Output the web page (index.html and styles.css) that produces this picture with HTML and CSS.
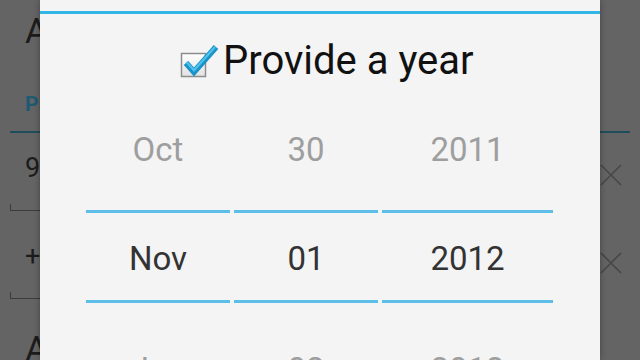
FILE: index.html
```html
<!DOCTYPE html>
<html lang="en">
<head>
    <meta charset="UTF-8">
    <meta name="viewport" content="width=device-width, initial-scale=1.0">
    <title>Set date</title>
    <link rel="stylesheet" href="styles.css">
</head>
<body>
    <div class="screen">
        <!-- Contact form behind the dialog (dimmed) -->
        <div class="form">
            <div class="form-item">Add organization</div>
            <div class="section-head">PHONE</div>

            <div class="field">
                <span class="field-text">999-555-1234</span>
                <svg class="clear" width="24" height="24" viewBox="0 0 24 24">
                    <path d="M2 2 L22 22 M22 2 L2 22" stroke="#474747" stroke-width="1.6" fill="none"/>
                </svg>
            </div>
            <div class="field-line"></div>

            <div class="field field-next">
                <span class="field-text">+1 555 0100</span>
                <svg class="clear" width="24" height="24" viewBox="0 0 24 24">
                    <path d="M2 2 L22 22 M22 2 L2 22" stroke="#474747" stroke-width="1.6" fill="none"/>
                </svg>
            </div>
            <div class="field-line"></div>

            <div class="form-item form-last">Add another field</div>
        </div>

        <!-- Date picker dialog -->
        <div class="dialog">
            <div class="dialog-head"></div>

            <div class="year-toggle">
                <svg class="check" width="42" height="36" viewBox="0 0 42 36">
                    <defs>
                        <linearGradient id="boxFill" x1="0" y1="0" x2="0" y2="1">
                            <stop offset="0" stop-color="#ffffff"/>
                            <stop offset="1" stop-color="#e2e2e2"/>
                        </linearGradient>
                    </defs>
                    <rect x="3.5" y="10.5" width="24" height="23" fill="url(#boxFill)" stroke="#8d8d8d" stroke-width="1.5"/>
                    <path d="M8 20 L16 29 L38 4" stroke="#1c93c8" stroke-width="6" fill="none" stroke-linejoin="miter"/>
                    <path d="M8.5 19 L16 27.3 L37 4" stroke="#4fc1ee" stroke-width="2.2" fill="none"/>
                </svg>
                <span class="toggle-label">Provide a year</span>
            </div>

            <div class="picker">
                <div class="col col-month">
                    <div class="cell cell-prev">Oct</div>
                    <div class="divider"></div>
                    <div class="cell cell-cur">Nov</div>
                    <div class="divider"></div>
                    <div class="cell cell-next">Jan</div>
                </div>
                <div class="col col-day">
                    <div class="cell cell-prev">30</div>
                    <div class="divider"></div>
                    <div class="cell cell-cur">01</div>
                    <div class="divider"></div>
                    <div class="cell cell-next">02</div>
                </div>
                <div class="col col-year">
                    <div class="cell cell-prev">2011</div>
                    <div class="divider"></div>
                    <div class="cell cell-cur">2012</div>
                    <div class="divider"></div>
                    <div class="cell cell-next">2013</div>
                </div>
            </div>
        </div>
    </div>
</body>
</html>
```

FILE: styles.css
```css
/* Page */
body {
    margin: 0;
    padding: 0;
    font-family: Roboto, "Liberation Sans", sans-serif;
    background-color: #646464;
}
.screen {
    position: relative;
    width: 640px;
    height: 360px;
    overflow: hidden;
    background-color: #646464;
}

/* Dimmed form behind the dialog */
.form {
    padding: 0 10px;
    color: #1c1c1c;
}
.form-item {
    height: 64px;
    line-height: 64px;
    padding-left: 15px;
    font-size: 35px;
    white-space: nowrap;
}
.form-last {
    margin-top: 19px;
}
.section-head {
    padding: 25px 0 12px 15px;
    line-height: 30px;
    font-size: 21px;
    font-weight: bold;
    color: #1d5a73;
    border-bottom: 2px solid #1f4d59;
}
.field {
    display: flex;
    align-items: center;
    justify-content: space-between;
    height: 69px;
    padding-left: 15px;
    font-size: 27px;
}
.field-next {
    margin-top: 10px;
}
.field-text {
    white-space: nowrap;
}
.clear {
    margin-top: 14px;
    margin-right: 7px;
}
.field-line {
    height: 6px;
    margin-top: 2px;
    margin-right: 40px;
    border-left: 1px solid #3b3b3b;
    border-bottom: 1px solid #3b3b3b;
}

/* Dialog */
.dialog {
    position: absolute;
    left: 40px;
    top: 0;
    width: 560px;
    height: 360px;
    background: #f4f4f4;
    box-shadow: 0 0 6px rgba(0,0,0,0.35);
}
.dialog-head {
    height: 11px;
    border-bottom: 3px solid #33b5e5;
}
.year-toggle {
    display: flex;
    align-items: center;
    height: 82px;
    padding-top: 12px;
    padding-left: 138px;
    box-sizing: border-box;
}
.toggle-label {
    margin-left: 3px;
    font-size: 40px;
    line-height: 46px;
    color: #111;
}

/* Number pickers */
.picker {
    display: flex;
    gap: 4px;
    padding-left: 46px;
}
.col {
    width: 144px;
    text-align: center;
    font-size: 33px;
}
.col-year {
    width: 171px;
}
.cell {
    color: #9e9e9e;
}
.cell-prev {
    height: 114px;
    line-height: 108px;
}
.cell-cur {
    height: 87px;
    padding-top: 5px;
    box-sizing: border-box;
    line-height: 82px;
    color: #333;
}
.cell-next {
    line-height: 134px;
}
.divider {
    height: 3px;
    background: #5dbfe8;
}
```
